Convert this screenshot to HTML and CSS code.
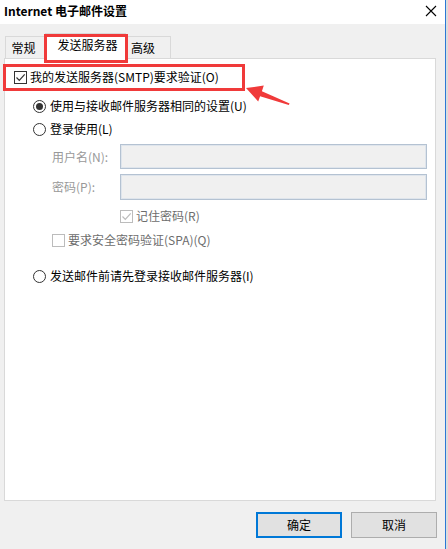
FILE: index.html
```html
<!DOCTYPE html>
<html lang="zh-CN">
<head>
<meta charset="utf-8">
<title>Internet 电子邮件设置</title>
<link rel="stylesheet" href="styles.css">
</head>
<body>
<div class="screen">
  <div class="window">
    <div class="titlebar">
      <span class="title">Internet 电子邮件设置</span>
      <svg class="close" width="12" height="12" viewBox="0 0 12 12"><path d="M1 1 L11 11 M11 1 L1 11" stroke="#000" stroke-width="1.1" fill="none"/></svg>
    </div>
    <div class="dialog">
      <div class="tabs">
        <div class="tab tab-a">常规</div>
        <div class="tab tab-sel">发送服务器</div>
        <div class="tab tab-c">高级</div>
      </div>
      <div class="panel">
        <div class="row row-auth">
          <span class="cb checked"><svg width="11" height="11" viewBox="0 0 11 11"><path d="M1.5 5.5 L4.3 8.3 L9.7 2.3" stroke="#333" stroke-width="1.2" fill="none"/></svg></span>
          <span class="lbl">我的发送服务器(SMTP)要求验证(O)</span>
        </div>
        <div class="row row-r1">
          <span class="radio on"><span class="dot"></span></span>
          <span class="lbl">使用与接收邮件服务器相同的设置(U)</span>
        </div>
        <div class="row row-r2">
          <span class="radio"></span>
          <span class="lbl">登录使用(L)</span>
        </div>
        <div class="field row-user">
          <span class="flabel">用户名(N):</span>
          <span class="input"></span>
        </div>
        <div class="field row-pass">
          <span class="flabel">密码(P):</span>
          <span class="input"></span>
        </div>
        <div class="row row-remember">
          <span class="cb disabled"><svg width="11" height="11" viewBox="0 0 11 11"><path d="M1.5 5.5 L4.3 8.3 L9.7 2.3" stroke="#bcbcbc" stroke-width="1.2" fill="none"/></svg></span>
          <span class="lbl dim">记住密码(R)</span>
        </div>
        <div class="row row-spa">
          <span class="cb disabled"></span>
          <span class="lbl dim">要求安全密码验证(SPA)(Q)</span>
        </div>
        <div class="row row-r3">
          <span class="radio"></span>
          <span class="lbl">发送邮件前请先登录接收邮件服务器(I)</span>
        </div>
      </div>
      <div class="footer">
        <button class="btn btn-default">确定</button>
        <button class="btn">取消</button>
      </div>
    </div>
    <div class="mark mark-tab"></div>
    <div class="mark mark-auth"></div>
    <svg class="arrow" width="60" height="36" viewBox="236 76 60 36">
      <polygon fill="#f03a3a" points="246,88 263.8,85.6 261.9,91.3 289.6,103.4 288.8,105 260.1,96.2 258.2,101.4"/>
    </svg>
  </div>
  <div class="backdrop"></div>
</div>
</body>
</html>
```

FILE: styles.css
```css
* { box-sizing: border-box; }
html, body { margin: 0; padding: 0; }
body {
  width: 448px;
  height: 549px;
  overflow: hidden;
  font-family: "Noto Sans CJK SC", "Noto Sans", sans-serif;
  font-size: 12px;
  color: #000;
  background: #f0f0f0;
}
.screen { display: flex; width: 448px; height: 549px; }
.window {
  position: relative;
  width: 446px;
  height: 549px;
  display: flex;
  flex-direction: column;
  border-right: 1px solid #2b78d6;
  background: #f0f0f0;
}
.backdrop { flex: 1; background: #dcdcdc; }

.titlebar {
  height: 24px;
  background: #fff;
  display: flex;
  align-items: center;
  padding-left: 4px;
  padding-right: 8px;
}
.title { font-weight: bold; font-size: 12px; flex: 1; line-height: 16px; margin-top: -2px; }
.close { display: block; margin-top: -2px; }

.dialog { flex: 1; display: flex; flex-direction: column; }

.tabs {
  display: flex;
  align-items: flex-end;
  height: 26px;
  margin-top: 9px;
  margin-left: 5px;
  margin-bottom: -1px;
  position: relative;
  z-index: 1;
}
.tab {
  height: 22px;
  border: 1px solid #d9d9d9;
  border-bottom: none;
  background: #f0f0f0;
  display: flex;
  align-items: center;
  justify-content: center;
  margin-bottom: 1px;
  line-height: 16px;
}
.tab-a { width: 40px; padding-right: 3px; }
.tab-sel {
  width: 81px;
  height: 26px;
  background: #fff;
  margin-bottom: 0;
  padding-bottom: 4px;
  padding-left: 4px;
}
.tab-c { width: 45px; padding-right: 10px; border-left: none; }

.panel {
  margin-left: 4px;
  width: 432px;
  height: 443px;
  border: 1px solid #d9d9d9;
  background: #fff;
  display: flex;
  flex-direction: column;
  padding-top: 9px;
}

.row { display: flex; align-items: center; height: 18px; line-height: 16px; }
.lbl { white-space: nowrap; }
.dim { color: #6d6d6d; }

.row-auth { margin-left: 9px; }
.row-auth .lbl { margin-left: 3px; }
.row-r1 { margin-left: 28px; margin-top: 11px; }
.row-r2 { margin-left: 28px; margin-top: 5px; }
.row-r1 .lbl, .row-r2 .lbl, .row-r3 .lbl { margin-left: 4px; }
.row-remember { margin-left: 115px; margin-top: 7px; }
.row-remember .lbl, .row-spa .lbl { margin-left: 3px; }
.row-spa { margin-left: 47px; margin-top: 6px; }
.row-r3 { margin-left: 28px; margin-top: 18px; }

.cb {
  width: 13px;
  height: 13px;
  border: 1px solid #333;
  background: #fff;
  display: flex;
  align-items: center;
  justify-content: center;
  flex: none;
}
.cb.disabled { border-color: #bcbcbc; background: #fff; }

.radio {
  width: 13px;
  height: 13px;
  border: 1px solid #333;
  border-radius: 50%;
  background: #fff;
  display: flex;
  align-items: center;
  justify-content: center;
  flex: none;
}
.radio .dot { width: 7px; height: 7px; border-radius: 50%; background: #333; }

.field { display: flex; align-items: center; height: 25px; margin-left: 47px; }
.row-user { margin-top: 6px; }
.row-pass { margin-top: 5px; height: 26px; }
.flabel { width: 68px; color: #999; white-space: nowrap; line-height: 16px; }
.input {
  width: 307px;
  height: 100%;
  border: 1px solid #b4c2d2;
  background: #f0f0f0;
  box-shadow: inset 0 0 0 1px #dfe5ec;
}

.footer {
  display: flex;
  justify-content: flex-end;
  gap: 9px;
  padding-right: 8px;
  margin-top: 11px;
}
.btn {
  width: 86px;
  height: 26px;
  border: 1px solid #adadad;
  background: #e1e1e1;
  font-family: "Noto Sans CJK SC", "Noto Sans", sans-serif;
  font-size: 12px;
  color: #000;
  padding: 0;
  line-height: 16px;
}
.btn-default { border: 2px solid #0078d7; }

.mark {
  position: absolute;
  border: 3px solid #f03a3a;
  z-index: 5;
}
.mark-tab { left: 44px; top: 34px; width: 84px; height: 29px; }
.mark-auth { left: 3px; top: 64px; width: 242px; height: 27px; }
.arrow { position: absolute; left: 236px; top: 76px; z-index: 5; }
```
